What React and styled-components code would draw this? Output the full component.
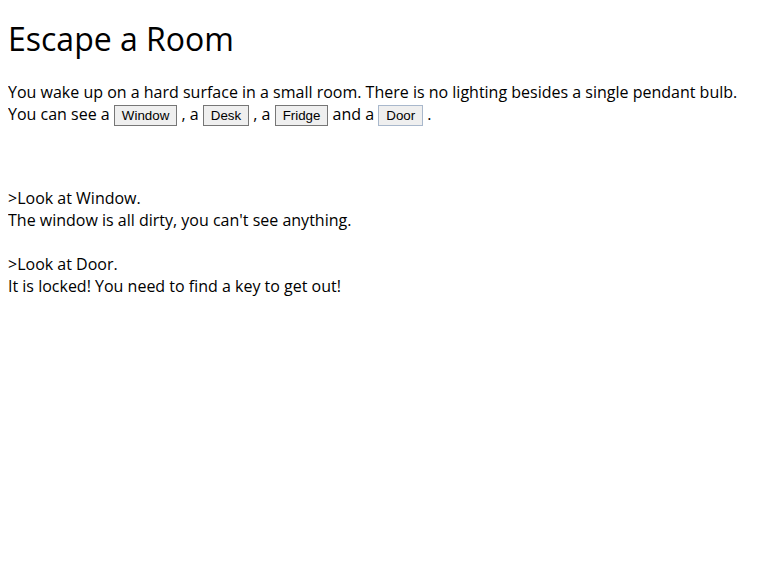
import styled, { createGlobalStyle } from "styled-components";

const GlobalStyle = createGlobalStyle`
  body {
    margin: 8px;
    font-family: "Open Sans", sans-serif;
    font-size: 16px;
    color: #000;
    background: #fff;
  }
`;

const Title = styled.h1`
  font-size: 32px;
  font-weight: normal;
  margin: 9px 0 21px;
`;

const Intro = styled.p`
  margin: 0;
  line-height: 22px;
`;

const ItemButton = styled.button`
  font-family: "Liberation Sans", Arial, sans-serif;
  font-size: 13.33px;
  padding: 2px 7px;
  margin: 0;
  background: #efefef;
  border: 1px solid ${(p) => (p.$hover ? "#a9b8cc" : "#767676")};
  border-radius: 0;
  color: #000;
  cursor: pointer;
`;

const Log = styled.div`
  margin-top: 61px;
  line-height: 22px;
`;

const Entry = styled.div`
  margin-bottom: 22px;
`;

export default function App() {
  return (
    <>
      <GlobalStyle />
      <Title>Escape a Room</Title>
      <Intro>
        You wake up on a hard surface in a small room. There is no lighting besides a single pendant bulb.
        <br />
        You can see a <ItemButton>Window</ItemButton> , a <ItemButton>Desk</ItemButton> , a{" "}
        <ItemButton>Fridge</ItemButton> and a <ItemButton $hover>Door</ItemButton> .
      </Intro>
      <Log>
        <Entry>
          <div>&gt;Look at Window.</div>
          <div>The window is all dirty, you can't see anything.</div>
        </Entry>
        <Entry>
          <div>&gt;Look at Door.</div>
          <div>It is locked! You need to find a key to get out!</div>
        </Entry>
      </Log>
    </>
  );
}
